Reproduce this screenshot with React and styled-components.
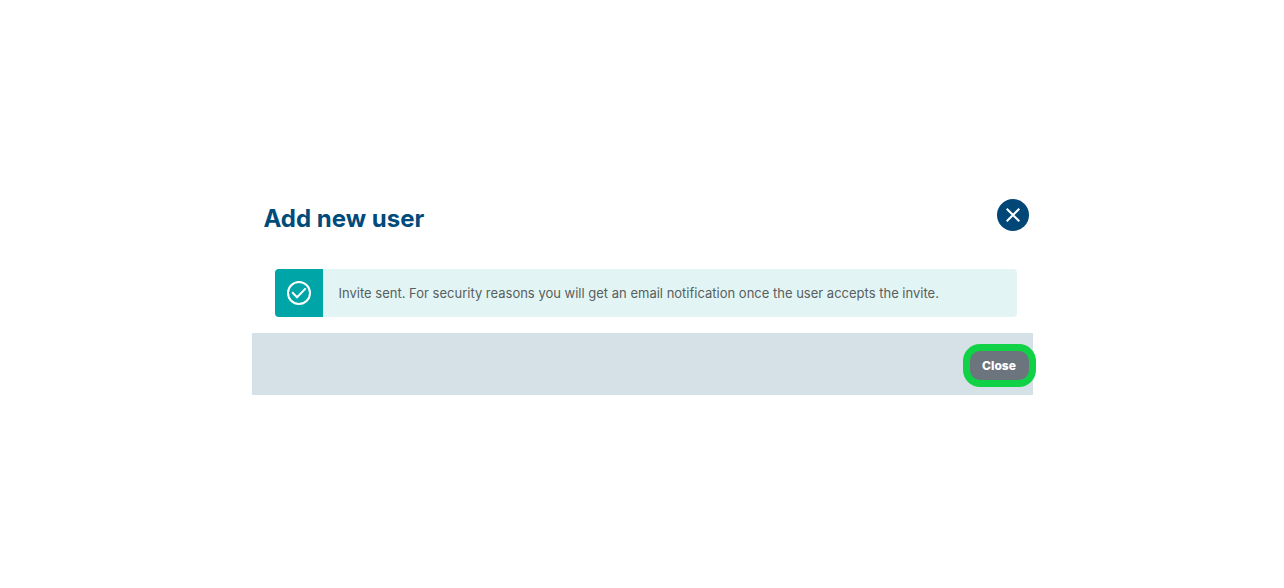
import React from 'react';
import styled, { createGlobalStyle } from 'styled-components';

const App = () => {
  return (
    <>
      <GlobalStyle />
      <Page>
        <Modal role="dialog" aria-labelledby="modal-title">
          <ModalHeader>
            <Title id="modal-title">Add new user</Title>
            <IconButton type="button" aria-label="Close dialog">
              <svg width="14" height="14" viewBox="0 0 14 14" fill="none" stroke="currentColor" strokeWidth="2">
                <path d="M0.7 0.7L13.3 13.3M13.3 0.7L0.7 13.3" />
              </svg>
            </IconButton>
          </ModalHeader>
          <Alert role="status">
            <AlertIcon>
              <svg width="24" height="24" viewBox="0 0 24 24" fill="none" stroke="currentColor" strokeWidth="2">
                <circle cx="12" cy="12" r="11" />
                <path d="M5.2 11.3L10 16.2L18.7 7.4" />
              </svg>
            </AlertIcon>
            <AlertText>
              Invite sent. For security reasons you will get an email notification once the user accepts the invite.
            </AlertText>
          </Alert>
          <ModalFooter>
            <CloseButton type="button">Close</CloseButton>
          </ModalFooter>
        </Modal>
      </Page>
    </>
  );
};

export default App;

const GlobalStyle = createGlobalStyle`
  * {
    box-sizing: border-box;
  }

  body {
    margin: 0;
    background-color: #fff;
    font-family: Inter, 'Liberation Sans', sans-serif;
  }
`;

const Page = styled.main`
  display: flex;
  align-items: center;
  justify-content: center;
  min-height: 100vh;
`;

const Modal = styled.section`
  width: 100%;
  max-width: 781px;
`;

const ModalHeader = styled.header`
  display: flex;
  align-items: flex-start;
  justify-content: space-between;
  padding: 6px 4px 30px 12px;
`;

const Title = styled.h1`
  margin: 0;
  font-size: 24px;
  font-weight: 700;
  line-height: 40px;
  color: #004b7a;
`;

const IconButton = styled.button`
  display: flex;
  align-items: center;
  justify-content: center;
  width: 32px;
  height: 32px;
  padding: 0;
  border: none;
  border-radius: 50%;
  background-color: #004677;
  color: #fff;
  cursor: pointer;
`;

const Alert = styled.div`
  display: flex;
  margin: 0 16px 16px 23px;
  border-radius: 4px;
  background-color: #e2f5f4;
  overflow: hidden;
`;

const AlertIcon = styled.span`
  display: flex;
  align-items: center;
  justify-content: center;
  flex-shrink: 0;
  width: 48px;
  min-height: 48px;
  background-color: #00a5a8;
  color: #fff;
`;

const AlertText = styled.p`
  margin: 0;
  padding: 14px 16px;
  font-size: 13px;
  line-height: 20px;
  color: #595e60;
`;

const ModalFooter = styled.footer`
  display: flex;
  justify-content: flex-end;
  padding: 18px 4px 15px;
  background-color: #d6e1e7;
`;

const CloseButton = styled.button`
  min-width: 59px;
  height: 29px;
  padding: 0 12px;
  border: none;
  border-radius: 10px;
  background-color: #6c757d;
  box-shadow: 0 0 0 7px #11d246;
  font-family: inherit;
  font-size: 12px;
  font-weight: 800;
  color: #fff;
  cursor: pointer;
`;
